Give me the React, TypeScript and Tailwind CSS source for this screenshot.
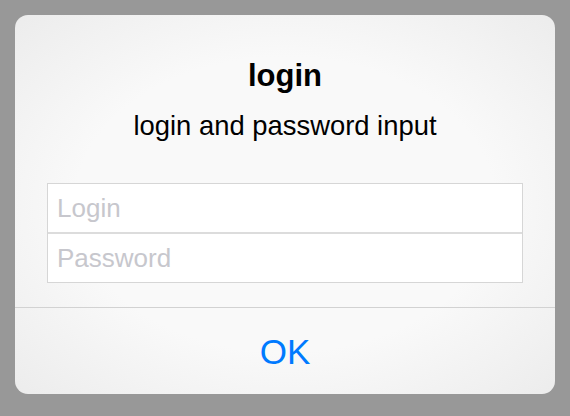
import React from "react";

export default function App() {
  return (
    <div className="w-[570px] h-[416px] bg-[#989898] pt-[15px] px-[15px] font-['Liberation_Sans',Arial,sans-serif]">
      <div className="w-[540px] h-[379px] rounded-[13px] overflow-hidden flex flex-col bg-[radial-gradient(ellipse_at_center,#f9f9f9_55%,#ececec_100%)]">
        <div className="pt-[43px] px-[32px] flex flex-col items-center">
          <h1 className="text-[31px] leading-[36px] font-bold text-black">login</h1>
          <p className="mt-[16px] text-[27.4px] leading-[31px] text-black">login and password input</p>
          <div className="mt-[42px] w-[476px] border border-[#d6d6d6] bg-white flex flex-col">
            <input
              placeholder="Login"
              className="h-[50px] px-[9px] text-[26px] outline-none bg-white placeholder:text-[#c7c7cd] border-b-2 border-[#dcdcdc]"
            />
            <input
              type="password"
              placeholder="Password"
              className="h-[48px] px-[9px] text-[26px] outline-none bg-white placeholder:text-[#c7c7cd]"
            />
          </div>
        </div>
        <div className="mt-[24px] border-t border-[#d2d2d2] flex-1 flex items-center justify-center">
          <button className="text-[35px] leading-[40px] text-[#007aff] mt-[2px]">OK</button>
        </div>
      </div>
    </div>
  );
}
